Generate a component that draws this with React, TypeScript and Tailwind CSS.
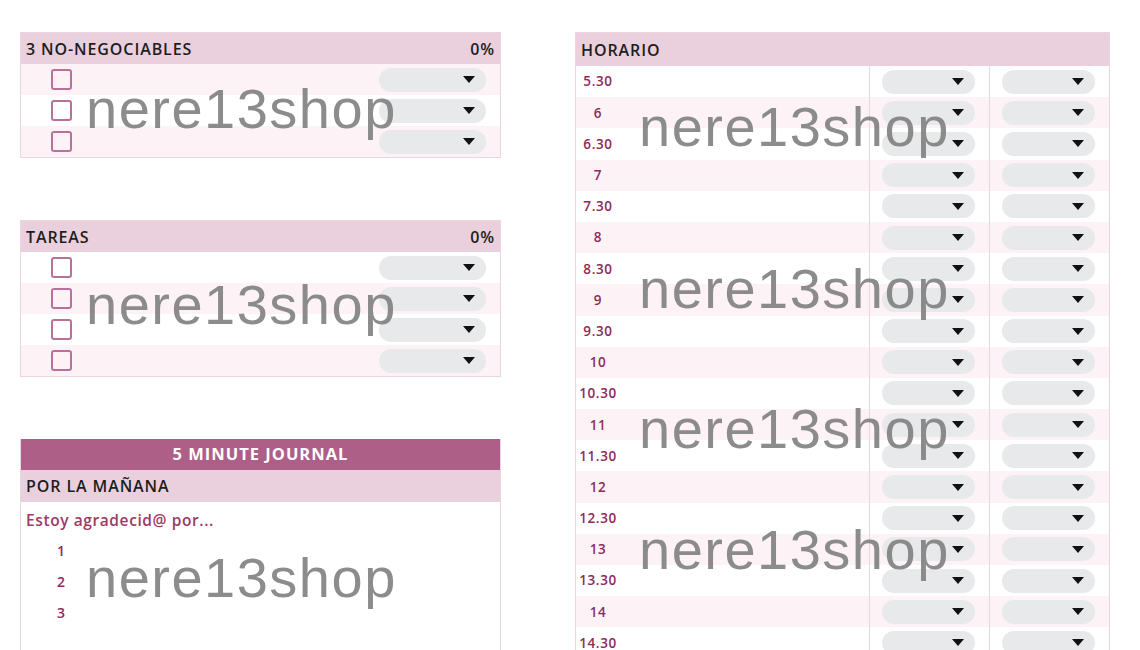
import React from "react";

const font = { fontFamily: '"Open Sans", "Liberation Sans", sans-serif' };

function Caret() {
  return (
    <svg width="12" height="7" viewBox="0 0 12 7" className="shrink-0">
      <path d="M0 0 L12 0 L6 7 Z" fill="#111" />
    </svg>
  );
}

function Pill({ className = "" }: { className?: string }) {
  return (
    <div className={"flex h-[24px] items-center justify-end rounded-full bg-[#e7e9ea] pr-[11px] " + className}>
      <Caret />
    </div>
  );
}

function Watermark({ className }: { className: string }) {
  return (
    <div
      className={"pointer-events-none absolute whitespace-nowrap text-[56px] leading-none tracking-[1.5px] text-[#7f7f7f]/90 " + className}
      style={{ fontFamily: '"Liberation Sans", Arial, sans-serif' }}
    >
      nere13shop
    </div>
  );
}

const headText = "text-[16px] font-semibold tracking-[0.9px] text-[#1d1d1d]";

function CheckPanel({ title, rows, shades }: { title: string; rows: number; shades: boolean[] }) {
  return (
    <div className="border border-[#ecd5df]">
      <div className={"flex h-[31px] items-center justify-between bg-[#ead0dc] px-[5px] " + headText}>
        <span>{title}</span>
        <span>0%</span>
      </div>
      {Array.from({ length: rows }).map((_, i) => (
        <div
          key={i}
          className={"flex h-[31px] items-center justify-between pl-[30px] pr-[14px] " + (shades[i] ? "bg-[#fdf3f7]" : "bg-white")}
        >
          <div className="h-[21px] w-[21px] rounded-[3px] border-2 border-[#b9709a]" />
          <Pill className="w-[107px]" />
        </div>
      ))}
    </div>
  );
}

const times = ["5.30", "6", "6.30", "7", "7.30", "8", "8.30", "9", "9.30", "10", "10.30", "11", "11.30", "12", "12.30", "13", "13.30", "14", "14.30"];

function App() {
  return (
    <div className="relative h-[650px] w-[1140px] overflow-hidden bg-white" style={font}>
      <div className="flex gap-[74px] pl-[20px] pt-[32px]">
        <div className="flex w-[481px] flex-col">
          <CheckPanel title="3 NO-NEGOCIABLES" rows={3} shades={[true, false, true]} />
          <div className="mt-[62px]">
            <CheckPanel title="TAREAS" rows={4} shades={[false, true, false, true]} />
          </div>
          <div className="mt-[62px] h-[300px] border border-t-0 border-[#e4d9de]">
            <div className="flex h-[31px] items-center justify-center bg-[#ad5f87] text-[16.5px] font-bold tracking-[1px] text-white">
              5 MINUTE JOURNAL
            </div>
            <div className={"flex h-[32px] items-center bg-[#ead0dc] px-[5px] " + headText}>POR LA MAÑANA</div>
            <div className="px-[5px] pt-[7px] text-[15.5px] font-semibold tracking-[0.6px] text-[#9a3a68]">Estoy agradecid@ por...</div>
            <div className="flex flex-col pl-[36px] pt-[3px] text-[14px] font-semibold text-[#8e2a5c]">
              <div className="flex h-[31px] items-center">1</div>
              <div className="flex h-[31px] items-center">2</div>
              <div className="flex h-[31px] items-center">3</div>
            </div>
          </div>
        </div>

        <div className="flex h-[620px] w-[535px] flex-col border border-b-0 border-[#ecd5df]">
          <div className={"flex h-[33px] shrink-0 items-center bg-[#ead0dc] px-[5px] " + headText}>HORARIO</div>
          <div className="flex">
            <div className="flex w-[294px] flex-col">
              {times.map((t, i) => (
                <div key={t} className={"flex h-[31.2px] shrink-0 items-center " + (i % 2 ? "bg-[#fdf3f7]" : "bg-white")}>
                  <span className="w-[44px] text-center text-[13.5px] font-semibold tracking-[0.6px] text-[#8e2a5c]">{t}</span>
                </div>
              ))}
            </div>
            {[0, 1].map((c) => (
              <div key={c} className="flex w-[120px] flex-col border-l border-[#ecd5df]">
                {times.map((t, i) => (
                  <div key={t} className={"flex h-[31.2px] shrink-0 items-center pl-[12px] pr-[14px] " + (i % 2 ? "bg-[#fdf3f7]" : "bg-white")}>
                    <Pill className="w-full" />
                  </div>
                ))}
              </div>
            ))}
          </div>
        </div>
      </div>

      <Watermark className="left-[86px] top-[81px]" />
      <Watermark className="left-[86px] top-[277px]" />
      <Watermark className="left-[86px] top-[550px]" />
      <Watermark className="left-[639px] top-[99px]" />
      <Watermark className="left-[639px] top-[261px]" />
      <Watermark className="left-[639px] top-[401px]" />
      <Watermark className="left-[639px] top-[522px]" />
    </div>
  );
}

export default App;
